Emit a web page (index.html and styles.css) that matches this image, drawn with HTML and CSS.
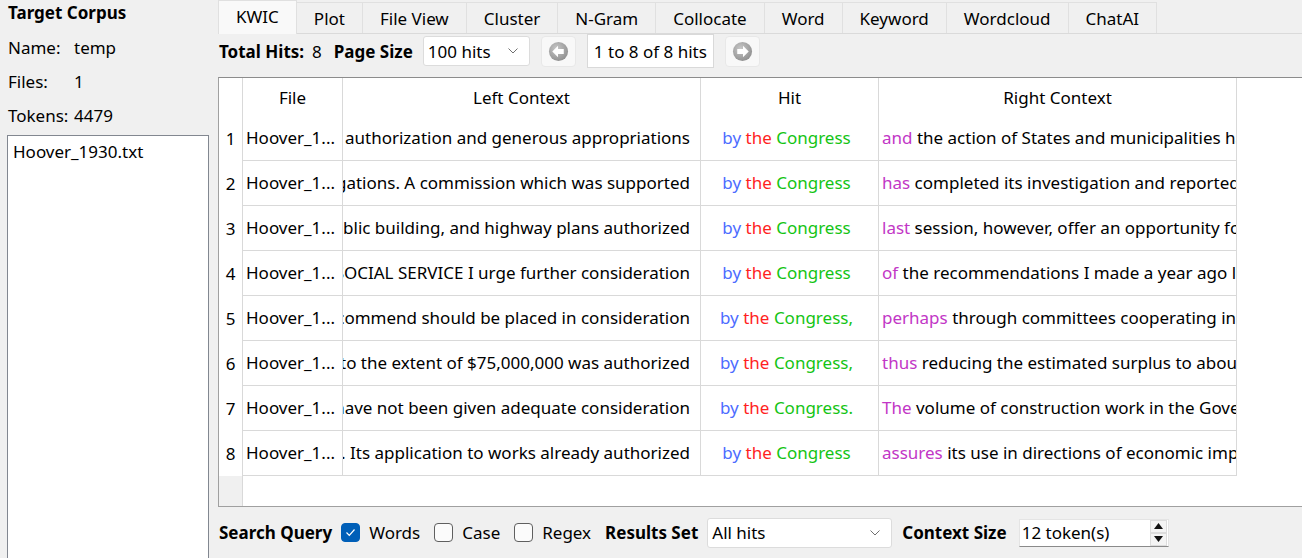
FILE: index.html
```html
<!DOCTYPE html>
<html>
<head>
<meta charset="utf-8">
<link rel="stylesheet" href="styles.css">
</head>
<body>
<div class="app">
  <aside class="sidebar">
    <div class="side-title">Target Corpus</div>
    <div class="info-row"><span class="info-label">Name:</span><span>temp</span></div>
    <div class="info-row"><span class="info-label">Files:</span><span>1</span></div>
    <div class="info-row"><span class="info-label">Tokens:</span><span>4479</span></div>
    <div class="file-list"><div class="file-item">Hoover_1930.txt</div></div>
  </aside>
  <main class="main">
    <nav class="tabs">
      <div class="tab tab-active">KWIC</div>
      <div class="tab">Plot</div>
      <div class="tab">File View</div>
      <div class="tab">Cluster</div>
      <div class="tab">N-Gram</div>
      <div class="tab">Collocate</div>
      <div class="tab">Word</div>
      <div class="tab">Keyword</div>
      <div class="tab">Wordcloud</div>
      <div class="tab">ChatAI</div>
    </nav>
    <div class="toolbar">
      <span class="bold">Total Hits:</span>
      <span class="hits-count">8</span>
      <span class="bold page-size-label">Page Size</span>
      <div class="combo combo-page"><span>100 hits</span><svg class="chev" width="10" height="6" viewBox="0 0 10 6"><polyline points="0.5,0.5 5,5 9.5,0.5" fill="none" stroke="#707070" stroke-width="1"/></svg></div>
      <div class="nav-btn"><svg width="21" height="21" viewBox="0 0 22 22"><defs><radialGradient id="gl" cx="40%" cy="35%" r="70%"><stop offset="0" stop-color="#c8c8c8"/><stop offset="1" stop-color="#8e8e8e"/></radialGradient></defs><circle cx="11" cy="11" r="10" fill="url(#gl)"/><path d="M4.5 11 L10.5 5 L10.5 8.3 L16.5 8.3 L16.5 13.7 L10.5 13.7 L10.5 17 Z" fill="#fff"/></svg></div>
      <div class="page-box">1 to 8 of 8 hits</div>
      <div class="nav-btn"><svg width="21" height="21" viewBox="0 0 22 22"><defs><radialGradient id="gr" cx="40%" cy="35%" r="70%"><stop offset="0" stop-color="#c8c8c8"/><stop offset="1" stop-color="#8e8e8e"/></radialGradient></defs><circle cx="11" cy="11" r="10" fill="url(#gr)"/><path d="M17.5 11 L11.5 5 L11.5 8.3 L5.5 8.3 L5.5 13.7 L11.5 13.7 L11.5 17 Z" fill="#fff"/></svg></div>
    </div>
    <div class="table">
      <div class="cell num"></div>
      <div class="cell hdr">File</div>
      <div class="cell hdr">Left Context</div>
      <div class="cell hdr">Hit</div>
      <div class="cell hdr">Right Context</div>

      <div class="cell num">1</div>
      <div class="cell row file">Hoover_1...</div>
      <div class="cell row left"><span>aided by liberal authorization and generous appropriations</span></div>
      <div class="cell row hit"><span class="w-by">by</span>&nbsp;<span class="w-the">the</span>&nbsp;<span class="w-cong">Congress</span></div>
      <div class="cell row right"><span><span class="w-next">and</span> the action of States and municipalities has been</span></div>

      <div class="cell num">2</div>
      <div class="cell row file">Hoover_1...</div>
      <div class="cell row left"><span>and investigations. A commission which was supported</span></div>
      <div class="cell row hit"><span class="w-by">by</span>&nbsp;<span class="w-the">the</span>&nbsp;<span class="w-cong">Congress</span></div>
      <div class="cell row right"><span><span class="w-next">has</span> completed its investigation and reported to the</span></div>

      <div class="cell num">3</div>
      <div class="cell row file">Hoover_1...</div>
      <div class="cell row left"><span>river and harbor, public building, and highway plans authorized</span></div>
      <div class="cell row hit"><span class="w-by">by</span>&nbsp;<span class="w-the">the</span>&nbsp;<span class="w-cong">Congress</span></div>
      <div class="cell row right"><span><span class="w-next">last</span> session, however, offer an opportunity for</span></div>

      <div class="cell num">4</div>
      <div class="cell row file">Hoover_1...</div>
      <div class="cell row left"><span>PUBLIC HEALTH SOCIAL SERVICE I urge further consideration</span></div>
      <div class="cell row hit"><span class="w-by">by</span>&nbsp;<span class="w-the">the</span>&nbsp;<span class="w-cong">Congress</span></div>
      <div class="cell row right"><span><span class="w-next">of</span> the recommendations I made a year ago looking</span></div>

      <div class="cell num">5</div>
      <div class="cell row file">Hoover_1...</div>
      <div class="cell row left"><span>the plan I recommend should be placed in consideration</span></div>
      <div class="cell row hit"><span class="w-by">by</span>&nbsp;<span class="w-the">the</span>&nbsp;<span class="w-cong">Congress,</span></div>
      <div class="cell row right"><span><span class="w-next">perhaps</span> through committees cooperating in the matter</span></div>

      <div class="cell num">6</div>
      <div class="cell row file">Hoover_1...</div>
      <div class="cell row left"><span>works to the extent of $75,000,000 was authorized</span></div>
      <div class="cell row hit"><span class="w-by">by</span>&nbsp;<span class="w-the">the</span>&nbsp;<span class="w-cong">Congress,</span></div>
      <div class="cell row right"><span><span class="w-next">thus</span> reducing the estimated surplus to about</span></div>

      <div class="cell num">7</div>
      <div class="cell row file">Hoover_1...</div>
      <div class="cell row left"><span>problems which have not been given adequate consideration</span></div>
      <div class="cell row hit"><span class="w-by">by</span>&nbsp;<span class="w-the">the</span>&nbsp;<span class="w-cong">Congress.</span></div>
      <div class="cell row right"><span><span class="w-next">The</span> volume of construction work in the Government</span></div>

      <div class="cell num">8</div>
      <div class="cell row file">Hoover_1...</div>
      <div class="cell row left"><span>Government. Its application to works already authorized</span></div>
      <div class="cell row hit"><span class="w-by">by</span>&nbsp;<span class="w-the">the</span>&nbsp;<span class="w-cong">Congress</span></div>
      <div class="cell row right"><span><span class="w-next">assures</span> its use in directions of economic importance</span></div>

      <div class="cell num corner-fill"></div>
    </div>
    <div class="bottom">
      <span class="bold">Search Query</span>
      <span class="check check-on"><svg width="17" height="17" viewBox="0 0 17 17"><polyline points="4.5,8.5 7.3,11.3 12.5,5.5" fill="none" stroke="#fff" stroke-width="1.2"/></svg></span>
      <span class="check-label">Words</span>
      <span class="check check-gap"></span>
      <span class="check-label">Case</span>
      <span class="check check-gap"></span>
      <span class="check-label">Regex</span>
      <span class="bold results-label">Results Set</span>
      <div class="combo combo-results"><span>All hits</span><svg class="chev" width="10" height="6" viewBox="0 0 10 6"><polyline points="0.5,0.5 5,5 9.5,0.5" fill="none" stroke="#707070" stroke-width="1"/></svg></div>
      <span class="bold context-label">Context Size</span>
      <div class="spin">
        <span>12 token(s)</span>
        <div class="spin-btns">
          <div class="spin-btn"><svg width="9" height="6" viewBox="0 0 9 6"><polygon points="4.5,0 9,6 0,6" fill="#111"/></svg></div>
          <div class="spin-btn"><svg width="9" height="6" viewBox="0 0 9 6"><polygon points="0,0 9,0 4.5,6" fill="#111"/></svg></div>
        </div>
      </div>
    </div>
  </main>
</div>
</body>
</html>
```

FILE: styles.css
```css
* { box-sizing: border-box; }
html, body { margin: 0; padding: 0; }
body {
  background: #f0f0f0;
  font-family: "Noto Sans", "Segoe UI", sans-serif;
  font-size: 17px;
  color: #000;
  width: 1302px;
  height: 558px;
  overflow: hidden;
}
.app { display: flex; height: 558px; }

.sidebar {
  width: 210px;
  flex: none;
  padding-left: 7px;
  display: flex;
  flex-direction: column;
}
.side-title { font-weight: 700; height: 30px; line-height: 26px; padding-left: 1px; }
.info-row { display: flex; align-items: center; height: 34px; padding-left: 1px; }
.info-label { width: 66px; }
.file-list {
  margin-top: 3px;
  flex: 1;
  width: 202px;
  background: #fff;
  border: 1px solid #828790;
  border-bottom: none;
  padding: 4px 5px;
}

.main {
  margin-left: 8px;
  flex: 1;
  min-width: 0;
  display: flex;
  flex-direction: column;
}

.tabs {
  display: flex;
  align-items: flex-end;
  height: 34px;
  border-bottom: 1px solid #dadada;
  flex: none;
}
.tab {
  height: 31px;
  padding: 1px 17px 0;
  display: flex;
  align-items: center;
  background: #f0f0f0;
  border: 1px solid #e0e0e0;
  border-bottom: none;
  margin-right: -1px;
}
.tab-active {
  height: 34px;
  margin-bottom: -1px;
  padding-bottom: 3px;
  background: #f9f9f9;
}

.toolbar {
  display: flex;
  align-items: center;
  height: 43px;
  padding: 0 0 9px 1px;
  flex: none;
}
.bold { font-weight: 700; }
.hits-count { margin-left: 8px; }
.page-size-label { margin-left: 12px; }
.combo {
  height: 30px;
  background: #fff;
  border: 1px solid #dcdcdc;
  border-radius: 3px;
  display: flex;
  align-items: center;
  justify-content: space-between;
  padding: 0 11px 0 4px;
}
.combo-page { width: 107px; margin-left: 10px; }
.chev { flex: none; }
.nav-btn {
  width: 35px;
  height: 31px;
  margin-left: 11px;
  background: #f8f8f8;
  border: 1px solid #e8e8e8;
  border-radius: 4px;
  display: flex;
  align-items: center;
  justify-content: center;
}
.page-box {
  width: 127px;
  height: 34px;
  margin-left: 11px;
  background: #fff;
  border: 1px solid #d9d9d9;
  display: flex;
  align-items: center;
  justify-content: center;
}

.table {
  height: 430px;
  flex: none;
  background: #fff;
  border-top: 1px solid #8c8c8c;
  border-left: 1px solid #a0a0a0;
  border-bottom: 1px solid #a0a0a0;
  display: grid;
  grid-template-columns: 24px 100px 358px 178px 358px;
  grid-template-rows: 38px repeat(8, 45px) 1fr;
}
.cell {
  display: flex;
  align-items: center;
  white-space: nowrap;
  overflow: hidden;
  border-right: 1px solid #d9d9d9;
}
.row { border-bottom: 1px solid #d9d9d9; padding-bottom: 1px; }
.hdr { justify-content: center; }
.num { justify-content: center; }
.file { padding-left: 3px; }
.left { justify-content: flex-end; padding-right: 10px; }
.left span, .right > span { flex: none; }
.hit { justify-content: center; padding-right: 6px; }
.right { padding-left: 3px; }
.corner-fill { background: #f0f0f0; }

.w-by { color: #4d6cff; }
.w-the { color: #ff1f1f; }
.w-cong { color: #14c414; }
.w-next { color: #c236c6; }

.bottom {
  flex: 1;
  display: flex;
  align-items: center;
  padding-left: 1px;
}
.check {
  width: 19px;
  height: 19px;
  flex: none;
  border-radius: 4px;
  border: 1px solid #5f5f5f;
  background: #fbfbfb;
  display: flex;
  align-items: center;
  justify-content: center;
}
.check-on { background: #005fb8; border-color: #005fb8; margin-left: 9px; }
.check-gap { margin-left: 14px; }
.check-label { margin-left: 9px; }
.results-label { margin-left: 14px; }
.combo-results { width: 185px; margin-left: 9px; }
.context-label { margin-left: 10px; }
.spin {
  width: 150px;
  height: 28px;
  margin-left: 12px;
  background: #fff;
  border: 1px solid #e4e4e4;
  border-bottom-color: #8a8a8a;
  display: flex;
  align-items: center;
  padding-left: 2px;
}
.spin-btns {
  margin-left: auto;
  margin-right: 1px;
  width: 17px;
  display: flex;
  flex-direction: column;
}
.spin-btn {
  height: 13px;
  background: #f4f4f4;
  border: 1px solid #dcdcdc;
  display: flex;
  align-items: center;
  justify-content: center;
}
```
